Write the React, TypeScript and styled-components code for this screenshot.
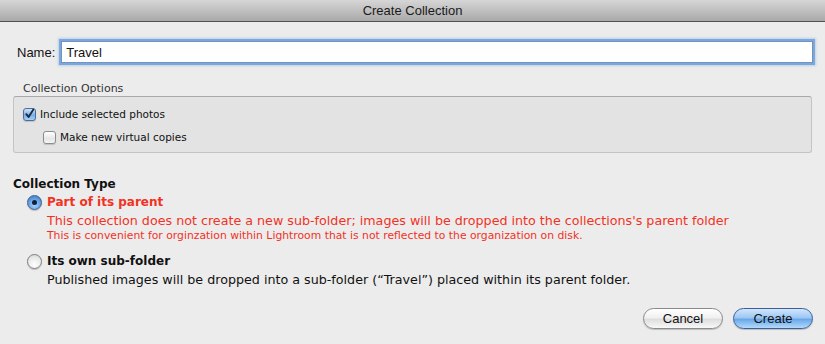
import styled, { createGlobalStyle } from 'styled-components';

const GlobalStyle = createGlobalStyle`
  html, body {
    margin: 0;
    padding: 0;
    background: #ececec;
  }
  * {
    box-sizing: border-box;
  }
`;

const UI_FONT = "'Liberation Sans', Arial, sans-serif";
const TEXT_FONT = "'DejaVu Sans', Verdana, sans-serif";

const App = () => {
  return (
    <>
      <GlobalStyle />
      <Dialog>
        <TitleBar>Create Collection</TitleBar>
        <Body>
          <NameRow>
            <NameLabel>Name:</NameLabel>
            <NameInput defaultValue="Travel" />
          </NameRow>

          <GroupLabel>Collection Options</GroupLabel>
          <GroupBox>
            <CheckRow>
              <CheckBox $checked>
                <svg width="12" height="12" viewBox="0 0 12 12">
                  <path
                    d="M2.5 6.2 L5 9.2 L10.2 1.2"
                    fill="none"
                    stroke="#1b2a3f"
                    strokeWidth="2"
                    strokeLinecap="round"
                    strokeLinejoin="round"
                  />
                </svg>
              </CheckBox>
              <CheckText>Include selected photos</CheckText>
            </CheckRow>
            <CheckRow $indent>
              <CheckBox />
              <CheckText>Make new virtual copies</CheckText>
            </CheckRow>
          </GroupBox>

          <SectionTitle>Collection Type</SectionTitle>
          <RadioRow>
            <Radio $selected />
            <RadioLabel $warn>Part of its parent</RadioLabel>
          </RadioRow>
          <Description $warn>
            This collection does not create a new sub-folder; images will be dropped into the
            collections's parent folder
          </Description>
          <Note>
            This is convenient for orginzation within Lightroom that is not reflected to the
            organization on disk.
          </Note>

          <RadioRow $spaced>
            <Radio />
            <RadioLabel>Its own sub-folder</RadioLabel>
          </RadioRow>
          <Description>
            Published images will be dropped into a sub-folder (“Travel”) placed within its parent
            folder.
          </Description>

          <ButtonRow>
            <Button>Cancel</Button>
            <Button $primary>Create</Button>
          </ButtonRow>
        </Body>
      </Dialog>
    </>
  );
};

const Dialog = styled.div`
  width: 825px;
  height: 344px;
  display: flex;
  flex-direction: column;
  background: #ececec;
  font-family: ${TEXT_FONT};
  color: #111;
  overflow: hidden;
`;

const TitleBar = styled.div`
  height: 22px;
  display: flex;
  align-items: center;
  justify-content: center;
  font-family: ${UI_FONT};
  font-size: 13px;
  color: #1a1a1a;
  background: linear-gradient(#d6d6d6, #a9a9a9);
  border-bottom: 1px solid #515151;
`;

const Body = styled.div`
  display: flex;
  flex-direction: column;
  padding: 0 12px 0 13px;
`;

const NameRow = styled.div`
  display: flex;
  align-items: center;
  gap: 6px;
  margin-top: 19px;
  height: 22px;
`;

const NameLabel = styled.span`
  font-family: ${UI_FONT};
  font-size: 13px;
  padding-left: 4px;
`;

const NameInput = styled.input`
  flex: 1;
  height: 22px;
  padding: 0 4px;
  font-family: ${UI_FONT};
  font-size: 13px;
  color: #111;
  background: #fff;
  border: 1px solid #6f94c4;
  outline: none;
  box-shadow: 0 0 0 2px rgba(104, 152, 214, 0.75), 0 0 2px 3px rgba(140, 180, 230, 0.5);
`;

const GroupLabel = styled.div`
  margin-top: 19px;
  padding-left: 10px;
  font-size: 11px;
  line-height: 14px;
  color: #333;
`;

const GroupBox = styled.div`
  height: 57px;
  margin-right: 1px;
  padding: 9px 9px 0;
  display: flex;
  flex-direction: column;
  gap: 7px;
  background: #e3e3e3;
  border: 1px solid #c4c4c4;
  border-top-color: #a9a9a9;
  border-radius: 3px;
`;

const CheckRow = styled.div<{ $indent?: boolean }>`
  display: flex;
  align-items: center;
  gap: 4px;
  height: 16px;
  padding-left: ${(p) => (p.$indent ? '20px' : '0')};
`;

const CheckBox = styled.span<{ $checked?: boolean }>`
  width: 13px;
  height: 13px;
  display: flex;
  align-items: center;
  justify-content: center;
  border-radius: 3px;
  border: 1px solid ${(p) => (p.$checked ? '#4b6d99' : '#8c8c8c')};
  background: ${(p) =>
    p.$checked
      ? 'linear-gradient(#cfe3f8, #78aee6 55%, #a7d0f6)'
      : 'linear-gradient(#ffffff, #e6e6e6 60%, #f6f6f6)'};
  box-shadow: 0 1px 1px rgba(0, 0, 0, 0.15);
`;

const CheckText = styled.span`
  font-size: 10.5px;
  color: #111;
`;

const SectionTitle = styled.div`
  margin-top: 23px;
  font-size: 12px;
  line-height: 16px;
  font-weight: bold;
  color: #111;
`;

const RadioRow = styled.div<{ $spaced?: boolean }>`
  display: flex;
  align-items: center;
  gap: 5px;
  height: 18px;
  margin-top: ${(p) => (p.$spaced ? '10px' : '1px')};
  padding-left: 14px;
`;

const Radio = styled.span<{ $selected?: boolean }>`
  position: relative;
  width: 15px;
  height: 15px;
  border-radius: 50%;
  border: 1px solid ${(p) => (p.$selected ? '#3f5f8c' : '#7f7f7f')};
  background: ${(p) =>
    p.$selected
      ? 'radial-gradient(circle at 50% 70%, #a9d3fb, #5d9ae0 60%, #3d72b8)'
      : 'radial-gradient(circle at 50% 75%, #ffffff, #e9e9e9 60%, #cfcfcf)'};
  box-shadow: 0 1px 1px rgba(0, 0, 0, 0.2);

  &::after {
    content: '';
    display: ${(p) => (p.$selected ? 'block' : 'none')};
    position: absolute;
    left: 50%;
    top: 50%;
    width: 5px;
    height: 5px;
    margin: -2.5px 0 0 -2.5px;
    border-radius: 50%;
    background: #10213a;
  }
`;

const RadioLabel = styled.span<{ $warn?: boolean }>`
  font-size: 12px;
  font-weight: bold;
  color: ${(p) => (p.$warn ? '#f2321f' : '#111')};
`;

const Description = styled.div<{ $warn?: boolean }>`
  margin-top: 2px;
  padding-left: 34px;
  font-size: 12.7px;
  line-height: 16px;
  color: ${(p) => (p.$warn ? '#f2321f' : '#111')};
`;

const Note = styled.div`
  padding-left: 34px;
  font-size: 10.8px;
  line-height: 13px;
  color: #f2321f;
`;

const ButtonRow = styled.div`
  display: flex;
  justify-content: flex-end;
  gap: 10px;
  margin-top: 20px;
`;

const Button = styled.button<{ $primary?: boolean }>`
  width: 80px;
  height: 21px;
  padding: 0;
  font-family: ${UI_FONT};
  font-size: 13px;
  color: #111;
  border-radius: 11px;
  border: 1px solid ${(p) => (p.$primary ? '#3b5f9c' : '#8a8a8a')};
  background: ${(p) =>
    p.$primary
      ? 'linear-gradient(#d2e6fb, #9dc8f4 45%, #6aa8ea 55%, #b3dafb)'
      : 'linear-gradient(#ffffff, #f1f1f1 45%, #dedede 55%, #f8f8f8)'};
  box-shadow: 0 1px 1px rgba(0, 0, 0, 0.2);
`;

export default App;
